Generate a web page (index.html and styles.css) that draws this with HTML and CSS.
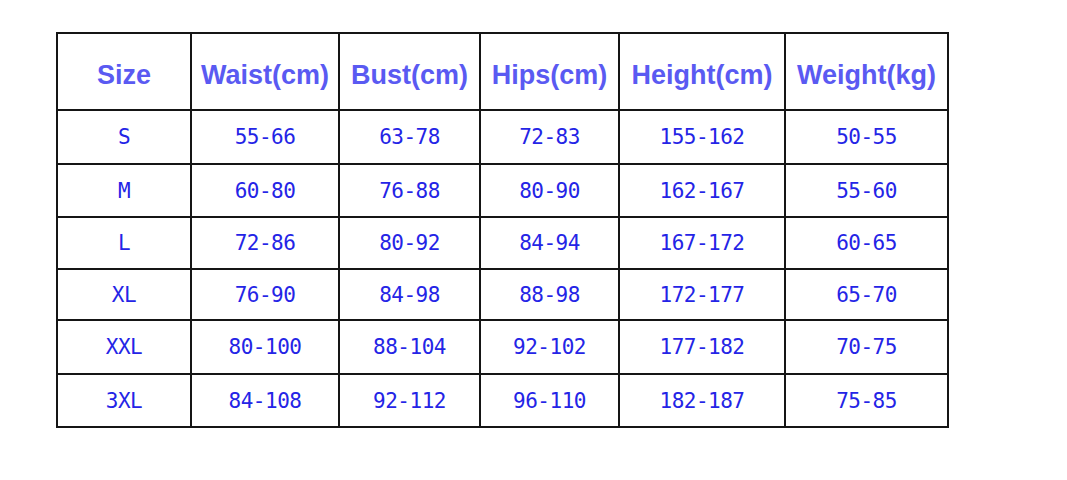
FILE: index.html
```html
<!DOCTYPE html>
<html>
<head>
<meta charset="utf-8">
<link rel="stylesheet" href="styles.css">
</head>
<body>
<table class="size-chart">
  <colgroup>
    <col class="c1"><col class="c2"><col class="c3"><col class="c4"><col class="c5"><col class="c6">
  </colgroup>
  <thead>
    <tr class="head">
      <th>Size</th><th>Waist(cm)</th><th>Bust(cm)</th><th>Hips(cm)</th><th>Height(cm)</th><th>Weight(kg)</th>
    </tr>
  </thead>
  <tbody>
    <tr class="r1"><td>S</td><td>55-66</td><td>63-78</td><td>72-83</td><td>155-162</td><td>50-55</td></tr>
    <tr class="r2"><td>M</td><td>60-80</td><td>76-88</td><td>80-90</td><td>162-167</td><td>55-60</td></tr>
    <tr class="r3"><td>L</td><td>72-86</td><td>80-92</td><td>84-94</td><td>167-172</td><td>60-65</td></tr>
    <tr class="r4"><td>XL</td><td>76-90</td><td>84-98</td><td>88-98</td><td>172-177</td><td>65-70</td></tr>
    <tr class="r5"><td>XXL</td><td>80-100</td><td>88-104</td><td>92-102</td><td>177-182</td><td>70-75</td></tr>
    <tr class="r6"><td>3XL</td><td>84-108</td><td>92-112</td><td>96-110</td><td>182-187</td><td>75-85</td></tr>
  </tbody>
</table>
</body>
</html>
```
FILE: styles.css
```css
html, body {
  margin: 0;
  padding: 0;
  background: #ffffff;
}
body {
  width: 1067px;
  height: 480px;
  overflow: hidden;
}
.size-chart {
  margin: 32px 0 0 56px;
  border-collapse: collapse;
  table-layout: fixed;
  width: 891px;
}
.size-chart th,
.size-chart td {
  border: 2px solid #151515;
  padding: 0;
  text-align: center;
  vertical-align: middle;
}
.c1 { width: 134px; }
.c2 { width: 148px; }
.c3 { width: 141px; }
.c4 { width: 139px; }
.c5 { width: 166px; }
.c6 { width: 163px; }
.size-chart th {
  font-family: "Liberation Sans", Arial, sans-serif;
  font-weight: bold;
  font-size: 27px;
  color: #5a5af2;
  white-space: nowrap;
  letter-spacing: 0;
  padding-top: 7px;
}
.size-chart td {
  font-family: "DejaVu Sans Mono", "Liberation Mono", monospace;
  font-size: 21px;
  color: #2424e6;
  letter-spacing: -0.5px;
}
.head { height: 77px; }
.r1 { height: 54px; }
.r2 { height: 53px; }
.r3 { height: 52px; }
.r4 { height: 51px; }
.r5 { height: 54px; }
.r6 { height: 53px; }
```
